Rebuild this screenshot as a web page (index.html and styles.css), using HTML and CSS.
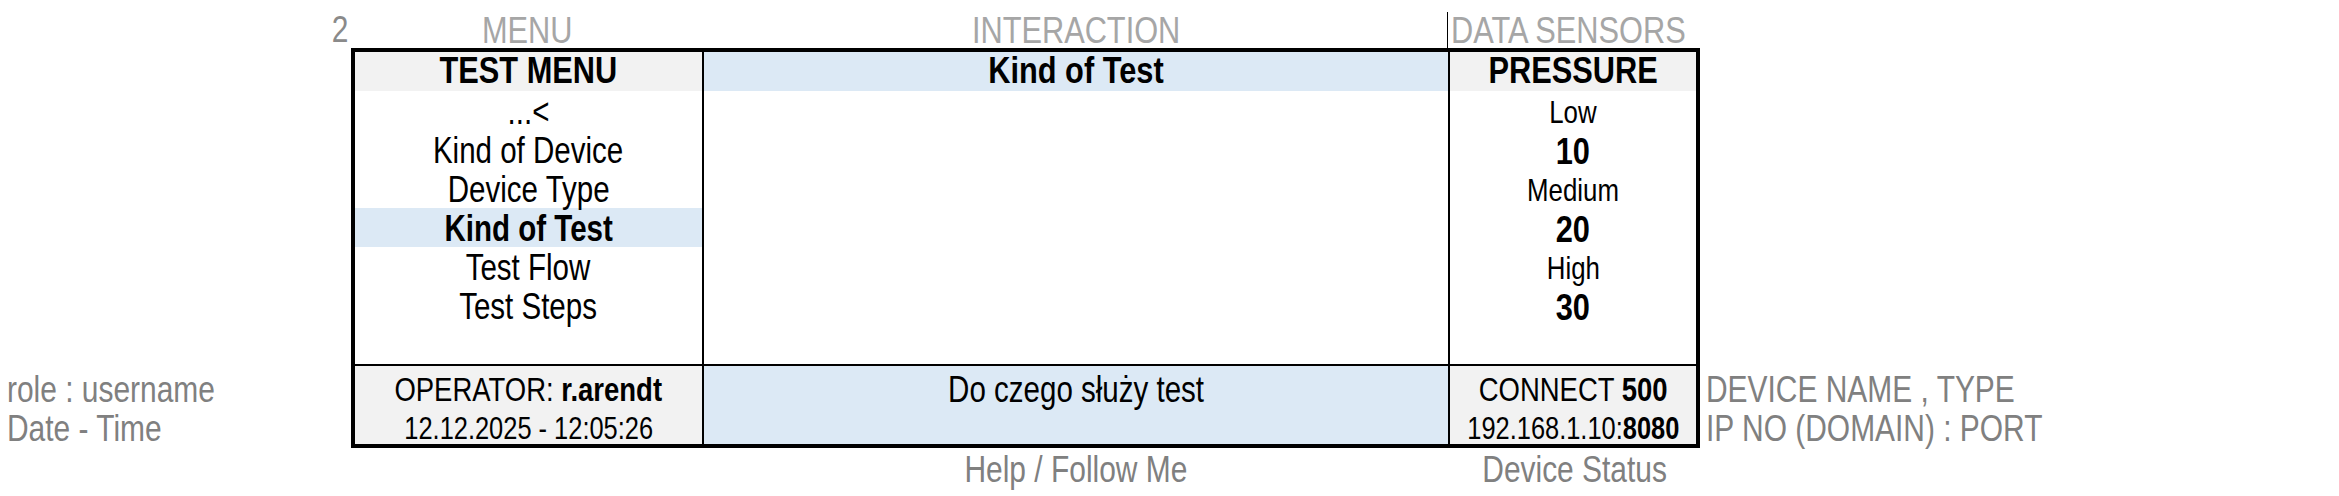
FILE: index.html
```html
<!DOCTYPE html>
<html lang="pl">
<head>
<meta charset="utf-8">
<title>Test Menu</title>
<link rel="stylesheet" href="styles.css">
</head>
<body>
<div class="page">
  <div class="top-labels">
    <div class="gutter-left"><span class="t t-right sheet-no">2</span></div>
    <div class="tl"><span class="t">MENU</span></div>
    <div class="tl"><span class="t">INTERACTION</span></div>
    <div class="tl tl-data"><span class="t t-left">DATA SENSORS</span></div>
  </div>

  <div class="main">
    <div class="side side-left">
      <div class="side-line"><span class="t t-left">role : username</span></div>
      <div class="side-line"><span class="t t-left">Date - Time</span></div>
    </div>

    <div class="panel">
      <div class="col col-menu">
        <div class="cell head grey"><span class="t">TEST MENU</span></div>
        <div class="cell"><span class="t">...&lt;</span></div>
        <div class="cell"><span class="t">Kind of Device</span></div>
        <div class="cell"><span class="t">Device Type</span></div>
        <div class="cell hl"><span class="t">Kind of Test</span></div>
        <div class="cell"><span class="t">Test Flow</span></div>
        <div class="cell"><span class="t">Test Steps</span></div>
        <div class="cell"></div>
        <div class="foot grey">
          <div class="cell f1"><span class="t">OPERATOR: <b>r.arendt</b></span></div>
          <div class="cell f2"><span class="t">12.12.2025 - 12:05:26</span></div>
        </div>
      </div>

      <div class="col col-inter">
        <div class="cell head blue"><span class="t">Kind of Test</span></div>
        <div class="work"></div>
        <div class="foot blue">
          <div class="cell help"><span class="t">Do czego służy test</span></div>
        </div>
      </div>

      <div class="col col-data">
        <div class="cell head grey"><span class="t">PRESSURE</span></div>
        <div class="cell small"><span class="t">Low</span></div>
        <div class="cell val"><span class="t">10</span></div>
        <div class="cell small"><span class="t">Medium</span></div>
        <div class="cell val"><span class="t">20</span></div>
        <div class="cell small"><span class="t">High</span></div>
        <div class="cell val"><span class="t">30</span></div>
        <div class="cell"></div>
        <div class="foot grey">
          <div class="cell f1"><span class="t">CONNECT <b>500</b></span></div>
          <div class="cell f2"><span class="t">192.168.1.10:<b>8080</b></span></div>
        </div>
      </div>
    </div>

    <div class="side side-right">
      <div class="side-line"><span class="t t-left">DEVICE NAME , TYPE</span></div>
      <div class="side-line"><span class="t t-left">IP NO (DOMAIN) : PORT</span></div>
    </div>
  </div>

  <div class="bottom-labels">
    <div class="gutter-left"></div>
    <div class="bl"></div>
    <div class="bl"><span class="t">Help / Follow Me</span></div>
    <div class="bl"><span class="t">Device Status</span></div>
  </div>
</div>
</body>
</html>
```

FILE: styles.css
```css
* {
  box-sizing: border-box;
}

html, body {
  margin: 0;
  padding: 0;
  background: #ffffff;
}

body {
  font-family: "Liberation Sans", Arial, sans-serif;
  color: #000000;
}

.page {
  width: 2339px;
  height: 496px;
  padding-top: 12px;
}

/* narrow (Arial Narrow-like) text */
.t {
  display: inline-block;
  white-space: nowrap;
  transform: scaleX(0.82);
  transform-origin: center center;
}

.t-left {
  transform-origin: left center;
}

.t-right {
  transform-origin: right center;
}

/* ---------- top labels ---------- */
.top-labels {
  display: grid;
  grid-template-columns: 351px 352px 746px 251px;
  height: 36px;
}

.gutter-left {
  display: flex;
  justify-content: flex-end;
  padding-right: 3px;
}

.sheet-no {
  font-size: 36.5px;
  line-height: 36px;
  color: #8a8a8a;
}

.tl {
  display: flex;
  justify-content: center;
  font-size: 37.5px;
  line-height: 36px;
  height: 36px;
  color: #a6a6a6;
}

.tl-data {
  justify-content: flex-start;
  border-left: 1px solid #000;
  margin-left: -2px;
  padding-left: 3px;
}

/* ---------- main row ---------- */
.main {
  display: grid;
  grid-template-columns: 351px 1349px 1fr;
  height: 400px;
}

.side {
  display: flex;
  flex-direction: column;
  justify-content: flex-end;
  padding-bottom: 4px;
  color: #808080;
  font-size: 36.5px;
}

.side-left {
  padding-left: 7px;
}

.side-right {
  padding-left: 6px;
}

.side-line {
  height: 39px;
  line-height: 36px;
  padding-top: 6px;
  white-space: nowrap;
}

/* ---------- panel ---------- */
.panel {
  display: flex;
  border: 4px solid #000;
  height: 400px;
}

.col {
  display: flex;
  flex-direction: column;
}

.col-menu {
  width: 347px;
}

.col-inter {
  width: 748px;
  border-left: 2px solid #000;
  border-right: 2px solid #000;
}

.col-data {
  width: 246px;
}

.cell {
  display: flex;
  justify-content: center;
  align-items: flex-start;
  height: 39px;
  line-height: 36px;
  padding-top: 3px;
  font-size: 36px;
}

.head {
  font-weight: bold;
  font-size: 37.5px;
  padding-top: 0;
  line-height: 37px;
}

.grey {
  background: #f2f2f2;
}

.blue {
  background: #dce9f5;
}

.hl {
  background: #dce9f5;
  font-weight: bold;
}

.small {
  font-size: 31.5px;
}

.val {
  font-weight: bold;
  font-size: 37.5px;
}

.work {
  height: 273px;
}

.foot {
  border-top: 2px solid #000;
  height: 80px;
}

.foot .cell {
  padding-top: 6px;
  line-height: 36px;
}

.f1 {
  font-size: 33.5px;
}

.f2 {
  font-size: 31px;
}

.help {
  font-size: 36px;
}

/* ---------- bottom labels ---------- */
.bottom-labels {
  display: grid;
  grid-template-columns: 351px 352px 746px 251px;
  height: 40px;
}

.bl {
  display: flex;
  justify-content: center;
  font-size: 36.5px;
  line-height: 40px;
  padding-top: 2px;
  color: #808080;
}
```
